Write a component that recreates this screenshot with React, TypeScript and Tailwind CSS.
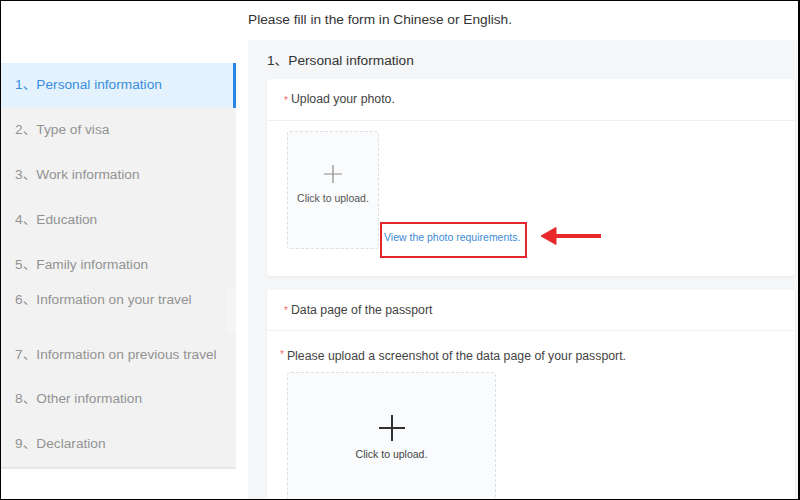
import React from "react";

const items = [
  "Personal information",
  "Type of visa",
  "Work information",
  "Education",
  "Family information",
  "Information on your travel",
  "Information on previous travel",
  "Other information",
  "Declaration",
];

function Star() {
  return <span className="text-[#f26a6a] text-[10px] leading-none align-top mr-[3px] relative top-[1px]">*</span>;
}

export default function App() {
  return (
    <div className="w-[800px] h-[500px] box-border border border-black border-r-2 overflow-hidden flex bg-white font-['Liberation_Sans','Noto_Sans_CJK_SC',Arial,sans-serif]">
      {/* Sidebar */}
      <div className="w-[235px] shrink-0 pt-[62px]">
        <div className="bg-[#f2f2f2] border-b-2 border-[#e6e6e6]">
          {items.map((t, i) => {
            const active = i === 0;
            const top = i === 5;
            return (
              <div
                key={t}
                className={
                  "h-[44.9px] flex text-[13.7px] " +
                  (active
                    ? "bg-[#e4f2fd] text-[#3a8de0] border-r-[3px] border-[#2b86e2] items-center"
                    : top
                    ? "text-[#929292] items-start"
                    : "text-[#929292] items-center")
                }
              >
                <span className={"pl-[14px] flex-1 " + (top ? "pt-[3px]" : "")}>
                  {i + 1}、{t}
                </span>
                {top && <span className="w-[9px] self-stretch bg-[#f5f5f5]" />}
              </div>
            );
          })}
        </div>
      </div>

      {/* Main */}
      <div className="flex-1 ml-[12px] flex flex-col">
        <div className="h-[39px] shrink-0 flex items-center text-[13.7px] text-[#333333]">
          Please fill in the form in Chinese or English.
        </div>
        <div className="flex-1 bg-[#f5f6f8] pl-[19px] pr-[3px]">
          <div className="h-[39px] pt-[3px] flex items-center text-[13.7px] text-[#333333]">1、Personal information</div>

          {/* Card 1 */}
          <div className="h-[197px] bg-white rounded-[3px] shadow-[0_1px_3px_rgba(0,0,0,0.05)] flex flex-col">
            <div className="h-[42px] shrink-0 border-b border-[#f0f0f0] pl-[17px] flex items-center text-[12.3px] text-[#444444]">
              <Star />
              Upload your photo.
            </div>
            <div className="flex items-start pt-[10px] pl-[20px]">
              <div className="w-[92px] h-[118px] shrink-0 rounded-[3px] border border-dashed border-[#dcdfe6] bg-[#fafbfc] flex flex-col items-center pt-[33px]">
                <svg width="18" height="18" viewBox="0 0 18 18">
                  <path d="M9 0V18M0 9H18" stroke="#8a8a8a" strokeWidth="1.2" fill="none" />
                </svg>
                <div className="mt-[9px] text-[10.5px] leading-[12px] text-[#555555]">Click to upload.</div>
              </div>
              <div className="ml-[1px] mt-[91px] w-[147px] h-[36px] shrink-0 border-2 border-[#e3262c] flex items-center pl-[2px] pb-[4px]">
                <span className="text-[10.5px] text-[#3d8ad6]">View the photo requirements.</span>
              </div>
              <svg className="ml-[14px] mt-[96px] shrink-0" width="60" height="18" viewBox="0 0 60 18">
                <path d="M0 9 L15 0.5 L15 17.5 Z" fill="#e8292b" stroke="#e8292b" strokeWidth="1" strokeLinejoin="round" />
                <rect x="14" y="7" width="46" height="4" fill="#e8292b" />
              </svg>
            </div>
          </div>

          {/* Card 2 */}
          <div className="mt-[14px] h-[240px] bg-white rounded-[3px] shadow-[0_1px_3px_rgba(0,0,0,0.05)] flex flex-col">
            <div className="h-[41px] shrink-0 border-b border-[#f0f0f0] pl-[17px] flex items-center text-[12.3px] text-[#444444]">
              <Star />
              Data page of the passport
            </div>
            <div className="pt-[18px] pl-[13px]">
              <div className="text-[12.3px] leading-[14px] text-[#444444]">
                <Star />
                Please upload a screenshot of the data page of your passport.
              </div>
              <div className="ml-[7px] mt-[9px] w-[209px] h-[140px] rounded-[4px] border border-dashed border-[#dcdfe6] bg-[#fafbfc] flex flex-col items-center pt-[42px]">
                <svg width="26" height="26" viewBox="0 0 26 26">
                  <path d="M13 0V26M0 13H26" stroke="#333333" strokeWidth="2" fill="none" />
                </svg>
                <div className="mt-[7px] text-[10.5px] leading-[12px] text-[#444444]">Click to upload.</div>
              </div>
            </div>
          </div>
        </div>
      </div>
    </div>
  );
}
